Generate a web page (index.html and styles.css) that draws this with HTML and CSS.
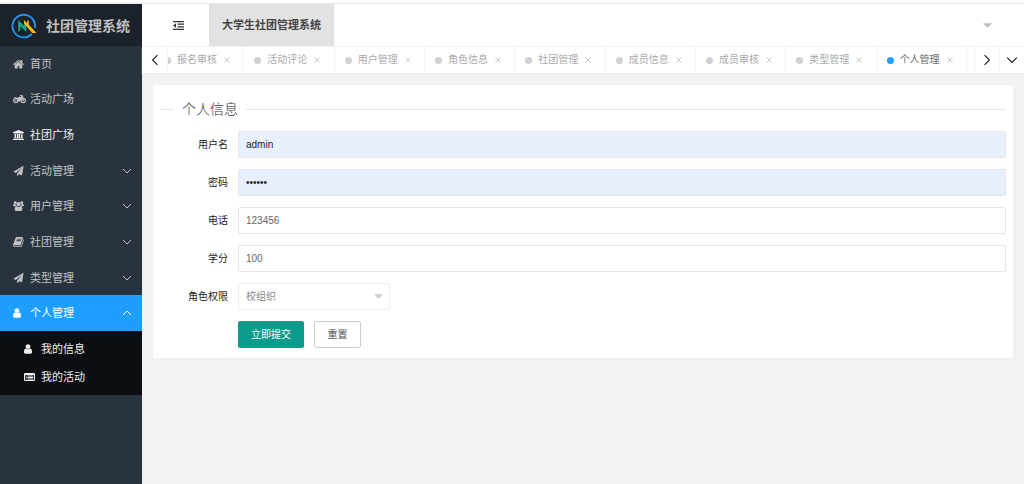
FILE: index.html
```html
<!DOCTYPE html>
<html lang="zh-CN">
<head>
<meta charset="utf-8">
<title>社团管理系统</title>
<link rel="stylesheet" href="styles.css">
</head>
<body>
<svg class="symbols" aria-hidden="true">
  <symbol id="plane" viewBox="0 0 1792 1792"><path d="M1764 11q33 24 27 64l-256 1536q-5 29-32 45-14 8-31 8-11 0-24-5l-453-185-242 295q-18 23-49 23-13 0-22-4-19-7-30.500-23.500t-11.500-36.500v-349l864-1059-1069 925-395-162q-37-14-40-55-2-40 32-59l1664-960q15-9 32-9 20 0 36 11z"/></symbol>
  <symbol id="user" viewBox="256 128 1280 1536"><path d="M1536 1399q0 109-62.500 187t-150.500 78h-854q-88 0-150.500-78t-62.500-187q0-85 8.500-160.500t31.500-152 58.500-131 94-89 134.500-34.500q131 128 313 128t313-128q76 0 134.500 34.500t94 89 58.500 131 31.500 152 8.500 160.500zm-256-887q0 159-112.500 271.500t-271.500 112.500-271.500-112.500-112.500-271.500 112.500-271.500 271.500-112.500 271.500 112.500 112.500 271.500z"/></symbol>
  <symbol id="down" viewBox="0 0 10 10"><path d="M1 3l4 4 4-4" fill="none" stroke="currentColor"/></symbol>
  <symbol id="close" viewBox="0 0 6 6"><path d="M.5.5l5 5m0-5l-5 5" fill="none" stroke="currentColor" stroke-width=".8"/></symbol>
</svg>
<div class="app">
  <aside class="sidebar">
    <div class="brand">
      <svg class="brand-logo" viewBox="0 0 26 26">
        <path d="M23.600 10A11.300 11.300 0 1 0 20.800 21" fill="none" stroke="#2196f3" stroke-width="1.800"/>
        <path d="M22 6.500A11.300 11.300 0 0 1 24 15" fill="none" stroke="#2196f3" stroke-width="1.800"/>
        <path d="M7.200 19V7l6 6V9.500l2.200 2.200V19l-6-5.500V17z" fill="#18a38c"/>
        <path d="M13 7l3.200 3.200V7.500h1.600v4.300L25.500 20h-4.200L13 10.500z" fill="#fbb917"/>
      </svg>
      <span>社团管理系统</span>
    </div>
    <nav>
      <ul class="menu">
        <li><a href="#"><svg class="icon" viewBox="64 192 1664 1344"><path d="M1472 992v480q0 26-19 45t-45 19h-384v-384h-256v384h-384q-26 0-45-19t-19-45v-480q0-1 .5-3t.5-3l575-474 575 474q1 2 1 6zm223-69l-62 74q-8 9-21 11h-3q-13 0-21-7l-692-577-692 577q-12 8-24 7-13-2-21-11l-62-74q-8-10-7-23.500t11-21.500l719-599q32-26 76-26t76 26l244 204v-195q0-14 9-23t23-9h192q14 0 23 9t9 23v408l219 182q10 8 11 21.500t-7 23.500z"/></svg><span>首页</span></a></li>
        <li><a href="#"><svg class="icon icon-wide" viewBox="0 0 26 18"><g fill="none" stroke="currentColor" stroke-width="2.400"><circle cx="5.500" cy="12" r="4.300"/><circle cx="20.500" cy="12" r="4.300"/><path d="M14 2h3l4 10"/></g><circle cx="5.500" cy="12" r="1.500"/><circle cx="20.500" cy="12" r="1.500"/><path d="M0 5.500h5.500l3 1.500 4-2.500 4.500.5 1.500 3-3 3-.5 3H9l1.500-3L7 7.500zM17 3l3.500-1.500v4z"/></svg><span>活动广场</span></a></li>
        <li><a class="bright" href="#"><svg class="icon" viewBox="0 0 20 18"><path d="M10 0l10 4v1.500h-1.500v.8h-17v-.8H0V4zM2.700 7h2.600v7H7V7h2.600v7h.8V7H13v7h1.700V7h2.600v7h1.200v1.500h-17V14h1.200zM0 16.300h20V18H0z"/></svg><span>社团广场</span></a></li>
        <li><a href="#"><svg class="icon"><use href="#plane"/></svg><span>活动管理</span><svg class="chevron"><use href="#down"/></svg></a></li>
        <li><a href="#"><svg class="icon" viewBox="0 0 20 18"><circle cx="4" cy="3" r="2.700"/><circle cx="16" cy="3" r="2.700"/><circle cx="10" cy="5.500" r="3.800"/><path d="M2 5.500q3 1.500 3.700.8Q5.500 8.500 7 9.500H1.500Q0 9.500 0 8 0 5.500 2 5.500zM18 5.500q-3 1.500-3.700.8.200 2.200-1.300 3.200h5.500q1.500 0 1.500-1.500 0-2.500-2-2.500zM6.500 9.500q3.500 2 7 0 3.500 0 3.500 6 0 2.500-2.500 2.500h-9Q3 18 3 15.500q0-6 3.500-6z"/></svg><span>用户管理</span><svg class="chevron"><use href="#down"/></svg></a></li>
        <li><a href="#"><svg class="icon" viewBox="64 128 1664 1536"><path d="M1703 478q40 57 18 129l-275 906q-19 64-76.500 107.500t-122.500 43.500h-923q-77 0-148.500-53.500t-99.500-131.500q-24-67-2-127 0-4 3-27t4-37q1-8-3-21.500t-3-19.500q2-11 8-21t16.500-23.500 16.500-23.500q23-38 45-91.500t30-91.500q3-10 .5-30t-.5-28q3-11 17-28t17-23q21-36 42-92t25-90q1-9-2.500-32t.5-28q4-13 22-30.500t22-22.500q19-26 42.500-84.500t27.500-96.500q1-8-3-25.500t-2-26.500q2-8 9-18t18-23 17-21q8-12 16.500-30.500t15-35 16-36 19.500-32 26.500-23.500 36-11.500 47.500 5.500l-1 3q38-9 51-9h761q74 0 114 56t18 130l-274 906q-36 119-71.500 153.500t-128.500 34.500h-869q-27 0-38 15-11 16-1 43 24 70 144 70h923q29 0 56-15.500t35-41.500l300-987q7-22 5-57 38 15 59 43zm-1064 2q-4 13 2 22.500t20 9.500h608q13 0 25.500-9.500t16.500-22.500l21-64q4-13-2-22.500t-20-9.500h-608q-13 0-25.500 9.500t-16.500 22.500zm-83 256q-4 13 2 22.500t20 9.500h608q13 0 25.500-9.500t16.500-22.500l21-64q4-13-2-22.500t-20-9.500h-608q-13 0-25.500 9.500t-16.500 22.500z"/></svg><span>社团管理</span><svg class="chevron"><use href="#down"/></svg></a></li>
        <li><a href="#"><svg class="icon"><use href="#plane"/></svg><span>类型管理</span><svg class="chevron"><use href="#down"/></svg></a></li>
        <li><a class="active" href="#"><svg class="icon icon-user"><use href="#user"/></svg><span>个人管理</span><svg class="chevron open"><use href="#down"/></svg></a></li>
      </ul>
      <ul class="submenu">
        <li><a href="#"><svg class="icon icon-user"><use href="#user"/></svg><span>我的信息</span></a></li>
        <li><a href="#"><svg class="icon" viewBox="0 0 22 20"><path fill-rule="evenodd" d="M2 2h18q2 0 2 2v12q0 2-2 2H2q-2 0-2-2V4q0-2 2-2zm0 4v10h18V6zM3.500 7h2v2h-2zM7 7h11.500v2H7zM3.500 10h2v2h-2zM7 10h11.500v2H7zM3.500 13h2v2h-2zM7 13h11.500v2H7z"/></svg><span>我的活动</span></a></li>
      </ul>
    </nav>
  </aside>
  <div class="content">
    <header class="topbar">
      <button class="fold" type="button" aria-label="收起菜单"><svg viewBox="0 0 11 9"><path d="M0 .6h11M4.500 3.200H11M4.500 5.800H11M0 8.400h11" fill="none" stroke="currentColor" stroke-width="1.200"/><path d="M0 4.500l3-2.200v4.400z"/></svg></button>
      <a class="system" href="#">大学生社团管理系统</a>
      <button class="account" type="button" aria-label="账户"><svg viewBox="0 0 8 4"><path d="M0 0h8L4 4z"/></svg></button>
    </header>
    <div class="tabbar">
      <button class="scroll" type="button" aria-label="向左"><svg class="turn-left"><use href="#down"/></svg></button>
      <div class="tabs-view">
        <ul class="tabs">
          <li><i></i><a href="#">报名审核</a><button type="button" aria-label="关闭"><svg><use href="#close"/></svg></button></li>
          <li><i></i><a href="#">活动评论</a><button type="button" aria-label="关闭"><svg><use href="#close"/></svg></button></li>
          <li><i></i><a href="#">用户管理</a><button type="button" aria-label="关闭"><svg><use href="#close"/></svg></button></li>
          <li><i></i><a href="#">角色信息</a><button type="button" aria-label="关闭"><svg><use href="#close"/></svg></button></li>
          <li><i></i><a href="#">社团管理</a><button type="button" aria-label="关闭"><svg><use href="#close"/></svg></button></li>
          <li><i></i><a href="#">成员信息</a><button type="button" aria-label="关闭"><svg><use href="#close"/></svg></button></li>
          <li><i></i><a href="#">成员审核</a><button type="button" aria-label="关闭"><svg><use href="#close"/></svg></button></li>
          <li><i></i><a href="#">类型管理</a><button type="button" aria-label="关闭"><svg><use href="#close"/></svg></button></li>
          <li class="current"><i></i><a href="#">个人管理</a><button type="button" aria-label="关闭"><svg><use href="#close"/></svg></button></li>
        </ul>
      </div>
      <button class="scroll" type="button" aria-label="向右"><svg class="turn-right"><use href="#down"/></svg></button>
      <button class="scroll" type="button" aria-label="更多"><svg><use href="#down"/></svg></button>
    </div>
    <main>
      <form class="card">
        <fieldset>
          <legend>个人信息</legend>
          <div class="fields">
            <label for="name">用户名</label>
            <input class="filled" id="name" type="text" value="admin">
            <label for="pass">密码</label>
            <input class="filled" id="pass" type="password" value="123456">
            <label for="phone">电话</label>
            <input id="phone" type="text" value="123456">
            <label for="credit">学分</label>
            <input id="credit" type="text" value="100">
            <label for="role">角色权限</label>
            <div class="select">
              <select id="role" disabled><option>校组织</option></select>
              <svg viewBox="0 0 8 4"><path d="M0 0h8L4 4z"/></svg>
            </div>
            <div class="actions">
              <button class="submit" type="submit">立即提交</button>
              <button class="reset" type="reset">重置</button>
            </div>
          </div>
        </fieldset>
      </form>
    </main>
  </div>
</div>
</body>
</html>
```
FILE: styles.css
```css
* { box-sizing: border-box; }

body {
  margin: 0;
  padding-top: 3px;
  background: #fff;
  color: #333;
  font: 10px/16px "Liberation Sans", "Noto Sans CJK SC", sans-serif;
}

ul { margin: 0; padding: 0; list-style: none; }
a { color: inherit; text-decoration: none; }
button { padding: 0; border: 0; background: none; color: inherit; font: inherit; }
svg { display: block; flex: none; fill: currentColor; }
.symbols { position: absolute; width: 0; height: 0; }

.app {
  display: flex;
  min-height: calc(100vh - 3px);
  border-top: 1px solid #e4e4e4;
}

/* Sidebar */
.sidebar { flex: none; width: 142px; background: #28333e; color: #c2c3c5; }
.brand {
  display: flex;
  align-items: center;
  gap: 9px;
  height: 42px;
  padding-left: 11px;
  padding-top: 2px;
  background: #1b2229;
  color: #c0bfc1;
  font-size: 14px;
  font-weight: bold;
}
.brand-logo { width: 26px; height: 26px; }
.menu { display: grid; grid-auto-rows: 1fr; height: 285px; }
.menu a {
  display: flex;
  align-items: center;
  gap: 6px;
  height: 100%;
  padding: 0 10px 0 13px;
  font-size: 11px;
}
.icon { width: 11px; height: 10px; }
.icon-wide { width: 13px; margin-right: -2px; }
.icon-user { width: 8px; margin-right: 3px; }
.menu .bright { color: #f0f0f0; }
.menu .active { background: #1e9fff; color: #fff; }
.chevron { width: 10px; height: 10px; margin-left: auto; }
.open { transform: rotate(180deg); }
.submenu { padding: 4px 0; background: #0b0e12; color: #eee; }
.submenu a {
  display: flex;
  align-items: center;
  gap: 6px;
  height: 28px;
  padding-left: 24px;
  font-size: 11px;
}

/* Header */
.content { display: flex; flex-direction: column; flex: 1; min-width: 0; background: #f2f2f2; }
.topbar { display: flex; height: 43px; background: #fff; border-bottom: 1px solid #f2f2f2; }
.fold { display: grid; place-items: center; width: 67px; padding-left: 5px; }
.fold svg { width: 11px; height: 9px; }
.system {
  display: grid;
  place-items: center;
  width: 125px;
  background: #e2e2e2;
  color: #444;
  font-size: 11px;
  font-weight: bold;
}
.account { margin-left: auto; padding: 0 32px; color: #bbb; }
.account svg { width: 9px; height: 5px; }

/* Tabs */
.tabbar { display: flex; height: 26px; background: #fff; box-shadow: 0 1px 1px #ececec; }
.scroll { display: grid; place-items: center; flex: none; width: 25px; border-left: 1px solid #f3f3f3; color: #222; }
.scroll:first-child { border-left: 0; }
.scroll svg { width: 12px; height: 12px; }
.turn-left { transform: rotate(90deg); }
.turn-right { transform: rotate(-90deg); }
.tabs-view { flex: 1; min-width: 0; overflow: hidden; border-left: 1px solid #f3f3f3; }
.tabs { display: flex; height: 100%; margin: 0 7px 0 -14px; color: #aaa; }
.tabs li {
  display: flex;
  align-items: center;
  flex: 1;
  min-width: 0;
  padding-left: 10px;
  border-right: 1px solid #f3f3f3;
}
.tabs i { flex: none; width: 7px; height: 7px; margin-right: 6px; border-radius: 50%; background: #d0d0d0; }
.tabs a { white-space: nowrap; }
.tabs button { margin-left: 7px; color: #bbb; }
.tabs button svg { width: 6px; height: 6px; }
.tabs .current { color: #666; }
.tabs .current i { background: #1e9fff; }

/* Form */
main { padding: 12px 11px; }
.card { padding: 14px 7px 10px; border-radius: 2px; background: #fff; }
fieldset { min-width: 0; margin: 0; padding: 0; border: 0; border-top: 1px solid #e6e6e6; }
legend { margin-left: 14px; padding: 0 8px; font-size: 14px; font-weight: 300; line-height: 20px; }
.fields {
  display: grid;
  grid-template-columns: 68px 1fr;
  align-items: center;
  gap: 11px 10px;
  padding-top: 12px;
}
label { text-align: right; color: #222; }
input, select {
  width: 100%;
  height: 27px;
  margin: 0;
  padding: 0 7px;
  border: 1px solid #e6e6e6;
  border-radius: 2px;
  background: #fff;
  color: #666;
  font: inherit;
}
.filled { background: #e8f0fe; color: #222; }
.select { display: grid; align-items: center; width: 152px; }
.select > * { grid-area: 1 / 1; }
.select svg { justify-self: end; width: 9px; height: 5px; margin-right: 7px; color: #ccc; }
select { appearance: none; border-color: #eee; color: #888; opacity: 1; }
.actions { display: flex; grid-column: 2; gap: 10px; }
.actions button { height: 27px; border-radius: 2px; }
.actions .submit { width: 66px; background: #0d9b8c; color: #fff; }
.actions .reset { width: 47px; border: 1px solid #ccc; color: #555; }
```
